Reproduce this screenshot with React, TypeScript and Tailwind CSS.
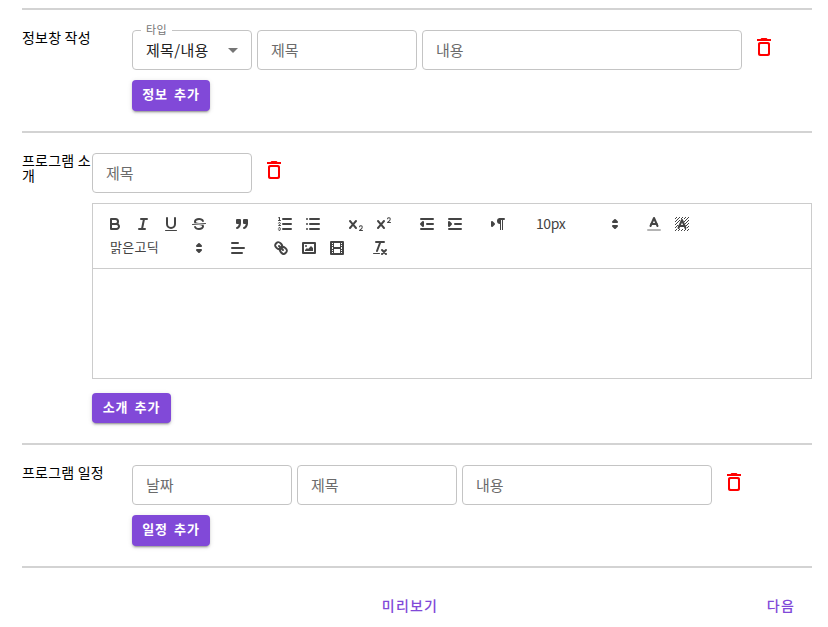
import type { ReactNode } from "react";

const X_PATH =
  "M9.65,5.241a1,1,0,0,0-1.409.108L6,7.964,3.759,5.349A1,1,0,0,0,2.192,6.592Q2.215,6.621,2.241,6.649L4.684,9.5,2.241,12.35A1,1,0,0,0,3.71,13.707q0.026-.028.049-0.057L6,11.036,8.241,13.65a1,1,0,1,0,1.567-1.243Q9.785,12.378,9.759,12.35L7.316,9.5,9.759,6.651A1,1,0,0,0,9.65,5.241Z";

// Hatched cells behind the letter in the background-colour icon
const hatch: [number, number][] = [];
for (let y = 2; y < 16; y++) {
  for (let x = 2; x < 16; x++) {
    const half = 1.6 + (y - 4) * 0.42;
    const nearLetter = y >= 4 && y <= 13 && Math.abs(x + 0.5 - 9) < half;
    if ((x + y) % 3 === 2 && !nearLetter) hatch.push([x, y]);
  }
}

const F = { fill: "#444", stroke: "none" };
const FS = { fill: "#444" };

const icons: Record<string, ReactNode> = {
  bold: (
    <>
      <path d="M5,4H9.5A2.5,2.5,0,0,1,12,6.5v0A2.5,2.5,0,0,1,9.5,9H5V4Z" />
      <path d="M5,9h5.5A2.5,2.5,0,0,1,13,11.5v0A2.5,2.5,0,0,1,10.5,14H5V9Z" />
    </>
  ),
  italic: <path d="M7,4H13M5,14H11M8,14L10,4" />,
  underline: (
    <>
      <path d="M5,3V9a4.012,4.012,0,0,0,4,4H9a4.012,4.012,0,0,0,4-4V3" />
      <rect {...F} height="1" rx="0.5" width="12" x="3" y="15" />
    </>
  ),
  strike: (
    <>
      <path strokeWidth="1" d="M15.5,8.5L2.5,9.5" />
      <path {...F} d="M9.007,8C6.542,7.791,6,7.519,6,6.5,6,5.792,7.283,5,9,5c1.571,0,2.765.679,2.969,1.309a1,1,0,0,0,1.9-.617C13.356,4.106,11.354,3,9,3,6.2,3,4,4.538,4,6.5a3.2,3.2,0,0,0,.5,1.843Z" />
      <path {...F} d="M8.984,10C11.457,10.208,12,10.479,12,11.5c0,0.708-1.283,1.5-3,1.5-1.571,0-2.765-.679-2.969-1.309a1,1,0,1,0-1.9.617C4.644,13.894,6.646,15,9,15c2.8,0,5-1.538,5-3.5a3.2,3.2,0,0,0-.5-1.843Z" />
    </>
  ),
  quote: (
    <>
      <rect {...FS} height="3" width="3" x="4" y="5" />
      <rect {...FS} height="3" width="3" x="11" y="5" />
      <path {...FS} d="M7,8c0,4.031-3,5-3,5" />
      <path {...FS} d="M14,8c0,4.031-3,5-3,5" />
    </>
  ),
  ordered: (
    <>
      <path d="M7,4H15M7,9H15M7,14H15" />
      <path strokeWidth="1" d="M2.5,5.5H4.5" />
      <path {...F} d="M3.5,6A0.5,0.5,0,0,1,3,5.5V3.085l-0.276.138A0.5,0.5,0,0,1,2.053,3c-0.124-.247-0.023-0.324.224-0.447l1-.5A0.5,0.5,0,0,1,4,2.5v3A0.5,0.5,0,0,1,3.5,6Z" />
      <path strokeWidth="1" d="M4.5,10.5h-2c0-.234,1.85-1.076,1.85-2.234A0.959,0.959,0,0,0,2.5,8.156" />
      <path strokeWidth="1" d="M2.5,14.846a0.959,0.959,0,0,0,1.85-.109A0.7,0.7,0,0,0,3.75,14a0.688,0.688,0,0,0,.6-0.736,0.959,0.959,0,0,0-1.85-.109" />
    </>
  ),
  bullet: <path d="M6,4H15M6,9H15M6,14H15M3,4V4M3,9V9M3,14V14" />,
  sub: (
    <>
      <path {...F} d="M15.5,15H13.861a3.858,3.858,0,0,0,1.914-2.975,1.8,1.8,0,0,0-1.6-1.751A1.921,1.921,0,0,0,12.021,11.7a0.5,0.5,0,1,0,.957.291h0a0.914,0.914,0,0,1,1.053-.725,0.81,0.81,0,0,1,.744.762c0,1.076-1.17,1.87-1.94,2.431A1.456,1.456,0,0,0,12,15.5a0.5,0.5,0,0,0,.5.5h3A0.5,0.5,0,0,0,15.5,15Z" />
      <path {...F} d={X_PATH} />
    </>
  ),
  sup: (
    <>
      <path {...F} d="M15.5,7H13.861a4.015,4.015,0,0,0,1.914-2.975,1.8,1.8,0,0,0-1.6-1.751A1.922,1.922,0,0,0,12.021,3.7a0.5,0.5,0,1,0,.957.291,0.917,0.917,0,0,1,1.053-.725,0.81,0.81,0,0,1,.744.762c0,1.077-1.164,1.925-1.934,2.486A1.423,1.423,0,0,0,12,7.5a0.5,0.5,0,0,0,.5.5h3A0.5,0.5,0,0,0,15.5,7Z" />
      <path {...F} d={X_PATH} />
    </>
  ),
  outdent: (
    <>
      <path d="M3,14H15M3,4H15M9,9H15" />
      <polyline points="5 7 5 11 3 9 5 7" />
    </>
  ),
  indent: (
    <>
      <path d="M3,14H15M3,4H15M9,9H15" />
      <polyline {...FS} points="3 7 3 11 5 9 3 7" />
    </>
  ),
  direction: (
    <>
      <polygon {...FS} points="3 11 5 9 3 7 3 11" />
      <path {...FS} d="M15,4H11" />
      <path {...F} d="M11,3a3,3,0,0,0,0,6h1V3H11Z" />
      <rect {...F} height="11" width="1" x="11" y="4" />
      <rect {...F} height="11" width="1" x="13" y="4" />
    </>
  ),
  arrows: (
    <>
      <polygon points="7 11 9 13 11 11 7 11" />
      <polygon points="7 7 9 5 11 7 7 7" />
    </>
  ),
  color: (
    <>
      <path opacity="0.4" d="M3,15H15" />
      <polyline points="5.5 11 9 3 12.5 11" />
      <path d="M11.63,9H6.38" />
    </>
  ),
  background: (
    <>
      {hatch.map(([x, y]) => (
        <rect key={`${x}-${y}`} {...F} x={x} y={y} width="1" height="1" />
      ))}
      <polyline points="5.5 13 9 5 12.5 13" />
      <path d="M11.63,11H6.38" />
    </>
  ),
  align: <path d="M3,9H15M3,14H13M3,4H9" />,
  link: (
    <>
      <path d="M7,7L11,11" />
      <path d="M8.9,4.577a3.476,3.476,0,0,1,.36,4.679A3.476,3.476,0,0,1,4.577,8.9C3.185,7.5,2.035,6.4,4.217,4.217S7.5,3.185,8.9,4.577Z" />
      <path d="M13.423,9.1a3.476,3.476,0,0,0-4.679-.36,3.476,3.476,0,0,0,.36,4.679c1.392,1.392,2.5,2.542,4.679.36S14.815,10.5,13.423,9.1Z" />
    </>
  ),
  image: (
    <>
      <rect height="10" width="12" x="3" y="4" />
      <circle {...F} cx="6" cy="7" r="1" />
      <polyline {...F} points="5 12 5 11 7 9 8 10 11 7 13 9 13 12 5 12" />
    </>
  ),
  video: (
    <>
      <rect height="12" width="12" x="3" y="3" />
      <path {...F} d="M5,3h1v12H5ZM12,3h1v12h-1ZM5,8h8v2H5ZM3,5h3v1H3ZM3,7h3v1H3ZM3,10h3v1H3ZM3,12h3v1H3ZM12,5h3v1h-3ZM12,7h3v1h-3ZM12,10h3v1h-3ZM12,12h3v1h-3Z" />
    </>
  ),
  clean: (
    <>
      <path d="M5,3H13M6,12L9.35,3M11,11L15,15M15,11L11,15" />
      <rect {...F} height="1" rx="0.5" width="7" x="2" y="14" />
    </>
  ),
};

function Glyph({ name }: { name: string }) {
  return (
    <svg viewBox="0 0 18 18" className="size-[18px] shrink-0" fill="none" stroke="#444" strokeWidth="2" strokeLinecap="round" strokeLinejoin="round">
      {icons[name]}
    </svg>
  );
}

function Tools({ names }: { names: string[] }) {
  return (
    <span className="mr-[15px] flex">
      {names.map((n) => (
        <button key={n} className="flex h-6 w-7 items-center justify-center">
          <Glyph name={n} />
        </button>
      ))}
    </span>
  );
}

function Picker({ label, className }: { label: string; className: string }) {
  return (
    <span className={`mr-[15px] flex h-6 items-center justify-between pr-px pl-[9px] text-[#444] ${className}`}>
      <span className="pb-0.5">{label}</span>
      <Glyph name="arrows" />
    </span>
  );
}

function Field({ text, className }: { text: string; className: string }) {
  return (
    <div className={`flex h-10 items-center rounded border border-[#c4c4c4] px-[13px] text-[15px] text-[#6b6b6b] ${className}`}>
      {text}
    </div>
  );
}

function Trash() {
  return (
    <svg viewBox="0 0 24 24" className="mt-[5px] ml-[5px] size-6 shrink-0" fill="#f00">
      <path d="M6 19c0 1.1.9 2 2 2h8c1.1 0 2-.9 2-2V9c0-1.1-.9-2-2-2H8c-1.1 0-2 .9-2 2v10zM9 9h6c.55 0 1 .45 1 1v8c0 .55-.45 1-1 1H9c-.55 0-1-.45-1-1v-8c0-.55.45-1 1-1zm6.5-5l-.71-.71c-.18-.18-.44-.29-.7-.29H9.91c-.26 0-.52.11-.7.29L8.5 4H5v2h14V4h-3.5z" />
    </svg>
  );
}

function AddButton({ children, className }: { children: ReactNode; className: string }) {
  return (
    <button className={`flex items-center justify-center rounded bg-[#8149d8] pb-[3px] text-[13px] font-bold tracking-[0.9px] [word-spacing:2.4px] whitespace-nowrap text-white shadow-[0_3px_1px_-2px_rgba(0,0,0,0.2),0_2px_2px_0_rgba(0,0,0,0.14),0_1px_5px_0_rgba(0,0,0,0.12)] ${className}`}>
      {children}
    </button>
  );
}

export default function App() {
  return (
    <div className="h-[627px] w-[828px] overflow-hidden bg-white pt-2 pr-4 pl-[22px] font-['Noto_Sans_CJK_KR',sans-serif] text-black">
      <section className="flex h-[123px] border-t-2 border-[#d3d3d3] pt-5">
        <div className="w-[110px] text-sm leading-[15px] tracking-[0.2px]">정보창 작성</div>
        <div>
          <div className="flex gap-[5px]">
            <div className="relative flex h-10 w-[120px] items-center justify-between rounded border border-[#c4c4c4] pr-1.5 pl-[13px] text-[15px] tracking-[0.3px] text-[#212121]">
              <span className="absolute -top-2.5 left-2 bg-white px-[5px] text-[11px] leading-4 text-[#757575]">타입</span>
              제목/내용
              <svg viewBox="0 0 24 24" className="size-6" fill="#757575">
                <path d="M7 10l5 5 5-5z" />
              </svg>
            </div>
            <Field text="제목" className="w-40" />
            <Field text="내용" className="w-80" />
            <Trash />
          </div>
          <AddButton className="mt-2.5 h-[31px] w-[78px]">정보 추가</AddButton>
        </div>
      </section>

      <section className="flex h-[312px] border-t-2 border-[#d3d3d3] pt-5">
        <div className="w-[70px] shrink-0 text-sm leading-[15px] tracking-[0.2px] break-all">프로그램 소개</div>
        <div className="grow">
          <div className="flex gap-[5px]">
            <Field text="제목" className="w-40" />
            <Trash />
          </div>
          <div className="mt-2.5 h-[176px] border border-[#ccc]">
            <div className="h-[65px] border-b border-[#ccc] p-2">
              <div className="flex">
                <Tools names={["bold", "italic", "underline", "strike"]} />
                <Tools names={["quote"]} />
                <Tools names={["ordered", "bullet"]} />
                <Tools names={["sub", "sup"]} />
                <Tools names={["outdent", "indent"]} />
                <Tools names={["direction"]} />
                <Picker label="10px" className="w-[98px] text-sm tracking-[-0.4px]" />
                <Tools names={["color", "background"]} />
              </div>
              <div className="flex">
                <Picker label="맑은고딕" className="w-[108px] text-[13px] tracking-[0.3px]" />
                <Tools names={["align"]} />
                <Tools names={["link", "image", "video"]} />
                <Tools names={["clean"]} />
              </div>
            </div>
          </div>
          <AddButton className="mt-3.5 h-[30px] w-[79px]">소개 추가</AddButton>
        </div>
      </section>

      <section className="flex h-[123px] border-t-2 border-[#d3d3d3] pt-5">
        <div className="w-[110px] text-sm leading-[15px] tracking-[0.2px]">프로그램 일정</div>
        <div>
          <div className="flex gap-[5px]">
            <Field text="날짜" className="w-40" />
            <Field text="제목" className="w-40" />
            <Field text="내용" className="w-[250px]" />
            <Trash />
          </div>
          <AddButton className="mt-2.5 h-[31px] w-[78px]">일정 추가</AddButton>
        </div>
      </section>

      <footer className="grid grid-cols-[1fr_auto_1fr] border-t-2 border-[#d3d3d3] pt-[27px] text-sm leading-5 font-medium tracking-[1.2px] text-[#8149d8]">
        <span />
        <button className="ml-[-14px]">미리보기</button>
        <button className="mr-[17px] justify-self-end">다음</button>
      </footer>
    </div>
  );
}
